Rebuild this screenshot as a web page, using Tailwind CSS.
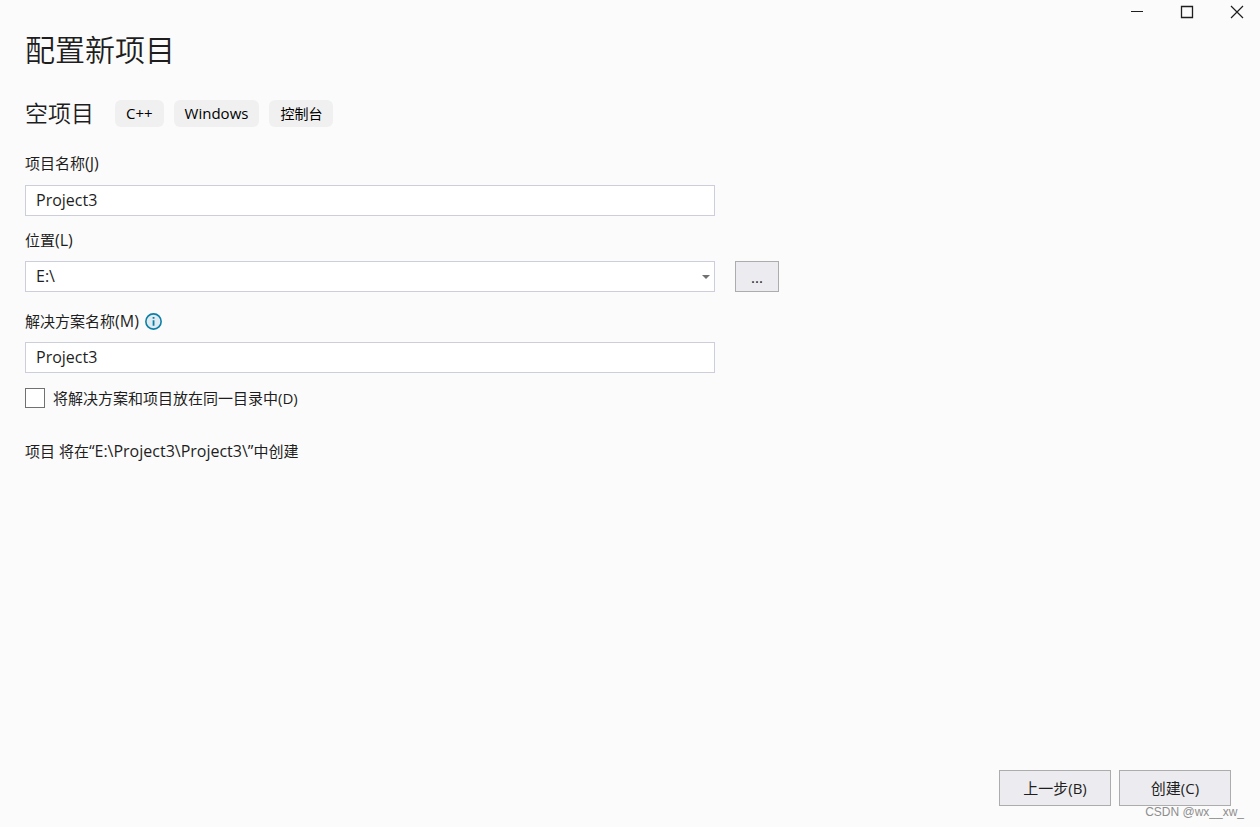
<!DOCTYPE html>
<html lang="zh-CN">
<head>
<meta charset="utf-8">
<meta name="viewport" content="width=device-width, initial-scale=1">
<title>配置新项目</title>
<script src="https://cdn.jsdelivr.net/npm/@tailwindcss/browser@4"></script>
</head>
<body class="flex min-h-screen flex-col bg-[#fbfbfb] font-['Open_Sans','Noto_Sans_CJK_SC',sans-serif] text-[15px] leading-5 text-[#1e1e1e]">
  <header class="flex h-6 justify-end">
    <button type="button" aria-label="最小化" class="flex w-[50px] items-center justify-center"><svg class="size-4" viewBox="0 0 16 16" fill="none" stroke="#1e1e1e" shape-rendering="crispEdges"><path d="M2 7.5h12"/></svg></button>
    <button type="button" aria-label="最大化" class="flex w-[50px] items-center justify-center"><svg class="size-4" viewBox="0 0 16 16" fill="none" stroke="#1e1e1e" stroke-width="1.3"><path d="M2.5 2.5h11v11h-11z"/></svg></button>
    <button type="button" aria-label="关闭" class="flex w-12 items-center justify-center pl-0.5"><svg class="size-4" viewBox="0 0 16 16" fill="none" stroke="#1e1e1e" stroke-width="1.2"><path d="M2 2l12 12M14 2L2 14"/></svg></button>
  </header>

  <main class="flex-1 px-[25px]">
    <h1 class="mt-1.5 text-[30px] leading-10 font-[350]">配置新项目</h1>
    <div class="mt-[30px] flex items-center gap-2.5">
      <h2 class="mr-[11px] text-[23px] leading-[27px] font-[350]">空项目</h2>
      <span class="rounded-md bg-[#f0f0f0] px-[11px] text-[15px] leading-[27px] text-black">C++</span>
      <span class="rounded-md bg-[#f0f0f0] px-[11px] text-[15px] leading-[27px] text-black">Windows</span>
      <span class="rounded-md bg-[#f0f0f0] px-[11px] text-[14px] leading-[27px] text-black">控制台</span>
    </div>

    <form id="project" class="mt-[26px]">
      <div class="max-w-[690px]">
        <label for="name" class="block">项目名称<span class="text-[16px] leading-5">(J)</span></label>
        <input id="name" type="text" value="Project3" class="mt-3 block h-[31px] w-full border border-[#cccedb] bg-white px-2.5 pb-0.5 text-[16px] outline-none">
      </div>

      <label for="location" class="mt-3.5 block">位置<span class="text-[16px] leading-5">(L)</span></label>
      <div class="mt-[11px] flex gap-5">
        <div class="relative max-w-[690px] flex-1">
          <select id="location" class="block h-[31px] w-full appearance-none border border-[#cccedb] bg-white px-2.5 pb-0.5 text-[16px] outline-none"><option>E:\</option></select>
          <svg class="pointer-events-none absolute top-3.5 right-[5px] h-1 w-2" viewBox="0 0 8 4" fill="#717171"><path d="M0 0h8L4 4z"/></svg>
        </div>
        <button type="button" aria-label="浏览" class="h-[31px] w-11 border border-[#acacac] bg-[#ececf0]">...</button>
      </div>

      <div class="mt-[19px] flex items-center gap-1.5">
        <label for="solution">解决方案名称<span class="text-[16px] leading-5">(M)</span></label>
        <svg class="size-[17px]" viewBox="0 0 16 16" role="img" aria-label="信息"><circle cx="8" cy="8" r="7.2" fill="#dfebf0" stroke="#0c7fa6" stroke-width="1.5"/><path d="M7.2 3.8h1.7v1.7H7.2zM7.2 6.8h1.7v5.2H7.2z" fill="#0c7fa6"/></svg>
      </div>
      <div class="mt-[11px] max-w-[690px]">
        <input id="solution" type="text" value="Project3" class="block h-[31px] w-full border border-[#cccedb] bg-white px-2.5 pb-0.5 text-[16px] outline-none">
      </div>

      <div class="mt-[15px] flex items-center gap-2">
        <input id="same" type="checkbox" class="size-5 appearance-none border border-[#717171] bg-white checked:bg-[#717171]">
        <label for="same">将解决方案和项目放在同一目录中(D)</label>
      </div>
    </form>

    <p class="mt-[33px]">项目 将在<span class="text-[16px] leading-5">“E:\Project3\Project3\”</span>中创建</p>
  </main>

  <footer class="relative flex justify-end gap-2 pr-[29px] pb-[21px]">
    <button type="button" class="h-9 w-28 border border-[#acacac] bg-[#ececf0]">上一步(B)</button>
    <button type="submit" form="project" class="h-9 w-28 border border-[#acacac] bg-[#ececf0]">创建(C)</button>
    <span class="absolute right-4 bottom-[7px] font-['Liberation_Sans',sans-serif] text-[12px] leading-4 text-[#8e8e8e]">CSDN @wx__xw_</span>
  </footer>
</body>
</html>
